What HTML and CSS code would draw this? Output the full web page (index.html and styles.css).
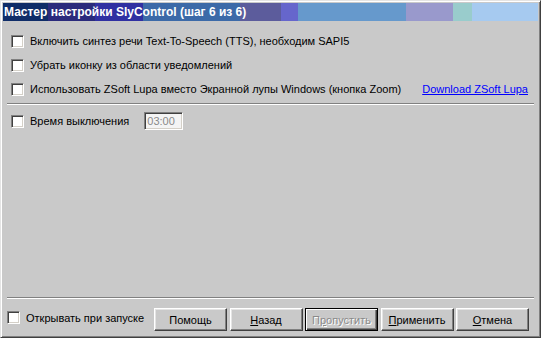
FILE: index.html
```html
<!DOCTYPE html>
<html lang="ru">
<head>
  <meta charset="UTF-8" />
  <title>Мастер настройки SlyControl</title>
  <link rel="stylesheet" href="styles.css">
</head>
<body>

  <div class="window">
    <header class="titlebar">
      <span class="title">Мастер настройки SlyControl (шаг 6 из 6)</span>
    </header>

    <div class="content">
      <div class="options">
        <label class="row"><input type="checkbox" class="check"> Включить синтез речи Text-To-Speech (TTS), необходим SAPI5</label>
        <label class="row"><input type="checkbox" class="check"> Убрать иконку из области уведомлений</label>
        <div class="row">
          <label class="row-label"><input type="checkbox" class="check"> Использовать ZSoft Lupa вместо Экранной лупы Windows (кнопка Zoom)</label>
          <a href="#" class="link">Download ZSoft Lupa</a>
        </div>
      </div>

      <hr class="etched">

      <div class="options">
        <div class="row time-row">
          <label class="row-label"><input type="checkbox" class="check"> Время выключения</label>
          <input type="text" class="time-input" value="03:00" disabled>
        </div>
      </div>

      <div class="bottom">
        <hr class="etched">
        <div class="footer">
          <label class="row-label startup"><input type="checkbox" class="check"> Открывать при запуске</label>
          <div class="buttons">
            <button class="btn">Помощь</button>
            <button class="btn"><u>Н</u>азад</button>
            <button class="btn default" disabled>П<u>р</u>опустить</button>
            <button class="btn"><u>П</u>рименить</button>
            <button class="btn"><u>О</u>тмена</button>
          </div>
        </div>
      </div>
    </div>
  </div>

</body>
</html>
```

FILE: styles.css
```css
* { margin:0; padding:0; box-sizing:border-box; }
body { background:#c9c9c9; font-family:'Liberation Sans', Arial, sans-serif; font-size:11px; color:#000; }

.window {
  width:541px; height:338px;
  display:flex; flex-direction:column;
  background:#c9c9c9;
  border:1px solid; border-color:#e4e4e4 #404040 #404040 #e4e4e4;
  box-shadow: inset 1px 1px #fff, inset -1px -1px #808080;
  padding:2px;
}

/* title bar with colour strips */
.titlebar {
  height:18px; display:flex; align-items:center; padding-left:1px;
  background: linear-gradient(to right,
    #0f2d68 0 45px,
    #2b2b7c 45px 92px,
    #3030a2 92px 140px,
    #3c6aa8 140px 237px,
    #5c5c9c 237px 278px,
    #6666cc 278px 295px,
    #6699cc 295px 403px,
    #9999cc 403px 450px,
    #99cccc 450px 469px,
    #a6caf0 469px);
}
.title { color:#fff; font-weight:bold; font-size:12px; white-space:nowrap; }

.content { flex:1; display:flex; flex-direction:column; padding:8px 4px 0 4px; }

.options { padding:0 6px 0 4px; }
.row { display:flex; align-items:center; height:24px; gap:6px; white-space:nowrap; }
.row-label { display:flex; align-items:center; gap:6px; }

.check {
  appearance:none; width:13px; height:13px; flex-shrink:0;
  background:#fff;
  border:1px solid; border-color:#808080 #fff #fff #808080;
  box-shadow: inset 1px 1px #404040, inset -1px -1px #d4d0c8;
}

.link { margin-left:auto; color:#0000ff; text-decoration:underline; }

.etched { border:none; height:2px; border-top:1px solid #808080; border-bottom:1px solid #fff; margin:2px 0; }

.time-row { height:28px; }
.time-input {
  margin-left:9px; width:39px; height:18px;
  background:#f4f4f4; color:#8a8a8a;
  font-family:inherit; font-size:11px; padding:0 2px;
  border:1px solid; border-color:#808080 #fff #fff #808080;
  box-shadow: inset 1px 1px #404040, inset -1px -1px #d4d0c8;
}

.bottom { margin-top:auto; }
.bottom .etched { margin-bottom:0; }
.footer { display:flex; align-items:center; height:36px; padding:9px 0 4px 0; }
.startup { white-space:nowrap; margin-top:-4px; }
.buttons { display:flex; gap:2.5px; margin-left:auto; margin-right:5px; }

.btn {
  width:73px; height:23px;
  font-family:inherit; font-size:11px; color:#000;
  background:#c9c9c9;
  border:1px solid; border-color:#fff #404040 #404040 #fff;
  box-shadow: inset -1px -1px #808080, inset 1px 1px #e4e4e4;
}
.btn.default { border-color:#000; box-shadow: inset 1px 1px #fff, inset -1px -1px #404040, inset -2px -2px #808080; }
.btn:disabled { color:#8a8a8a; text-shadow:1px 1px #fff; }
```
